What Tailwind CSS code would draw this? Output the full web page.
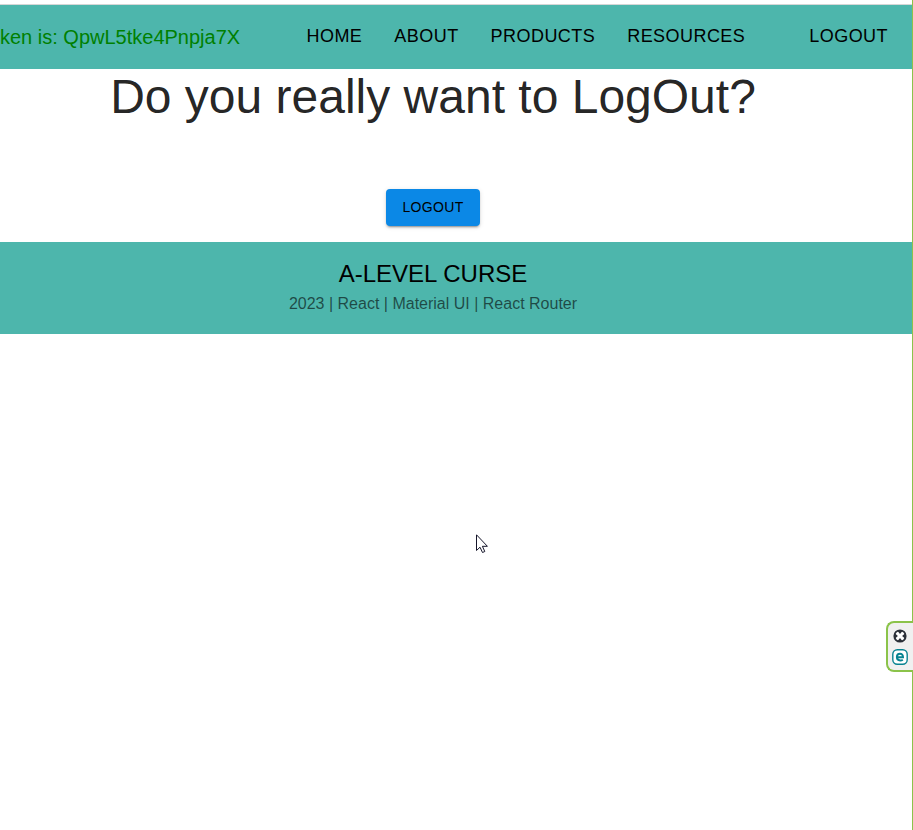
<!DOCTYPE html>
<html lang="en">
<head>
<meta charset="utf-8">
<meta name="viewport" content="width=device-width, initial-scale=1">
<title>Log out</title>
<script src="https://cdn.jsdelivr.net/npm/@tailwindcss/browser@4"></script>
</head>
<body class="min-h-screen bg-white border-r border-[#8bc34a] font-['Liberation_Sans',Arial,sans-serif] text-black overflow-x-hidden">
<header class="mt-1 flex h-[65px] items-center border-t border-[#d6d6d6] bg-[#4db6ac]">
  <div class="w-60 shrink-0 overflow-hidden">
    <p class="whitespace-nowrap text-xl leading-8 text-[#008000]">ken is: QpwL5tke4Pnpja7X</p>
  </div>
  <nav class="ml-auto flex items-center pr-2 pb-0.5 text-lg leading-8 tracking-wide">
    <a href="#home" class="px-4">HOME</a>
    <a href="#about" class="px-4">ABOUT</a>
    <a href="#products" class="px-4">PRODUCTS</a>
    <a href="#resources" class="px-4">RESOURCES</a>
    <a href="#logout" class="ml-8 px-4">LOGOUT</a>
  </nav>
</header>
<main class="flex flex-col items-center pr-[46px] pb-4">
  <h1 class="text-5xl leading-[56px] text-black/87">Do you really want to LogOut?</h1>
  <button type="button" class="mt-16 rounded bg-[#0b88e6] px-4 py-2 text-sm leading-[21px] tracking-wide shadow-[0_3px_1px_-2px_rgb(0_0_0/0.2),0_2px_2px_0_rgb(0_0_0/0.14),0_1px_5px_0_rgb(0_0_0/0.12)]">LOGOUT</button>
</main>
<footer class="bg-[#4db6ac] pt-4 pb-4 pr-[46px] text-center">
  <h2 class="text-2xl leading-8">A-LEVEL CURSE</h2>
  <p class="text-base leading-7 text-black/60">2023 | React | Material UI | React Router</p>
</footer>
<aside class="fixed right-0 top-[621px] flex h-[51px] w-[27px] flex-col items-center gap-[5px] rounded-l-lg border-2 border-r-0 border-[#8bc34a] bg-[#f0f0f0] pt-[5px] pr-px">
  <button type="button" aria-label="Close" class="size-4">
    <svg viewBox="0 0 16 16" class="size-4"><circle cx="8" cy="8" r="5.700" fill="#fff" stroke="#2b2f38" stroke-width="1.800"/><path d="M5.300 2.800h5.400L8 5.900zM5.300 13.200h5.400L8 10.100zM2.800 5.300v5.400L5.900 8zM13.200 5.300v5.400L10.100 8z" fill="#2b2f38"/></svg>
  </button>
  <button type="button" aria-label="Open extension" class="size-4">
    <svg viewBox="0 0 16 16" class="size-4"><rect x=".8" y=".8" width="14.4" height="14.4" rx="4.500" fill="#fff" stroke="#078391" stroke-width="1.400"/><path d="M5 8.200h6C11 5.900 9.900 4.700 8 4.700S4.900 6 4.900 8s1.200 3.400 3.300 3.400c1.100 0 1.900-.2 2.600-.7" fill="none" stroke="#078391" stroke-width="2"/></svg>
  </button>
</aside>
<svg aria-hidden="true" viewBox="0 0 12 20" class="pointer-events-none fixed left-[476px] top-[534px] h-5 w-3"><path d="M.5.8v15.700l3.500-3.300 2.500 5.300 2.300-1-2.400-5.200h5z" fill="#fff" stroke="#15152a" stroke-width="1"/></svg>
</body>
</html>
